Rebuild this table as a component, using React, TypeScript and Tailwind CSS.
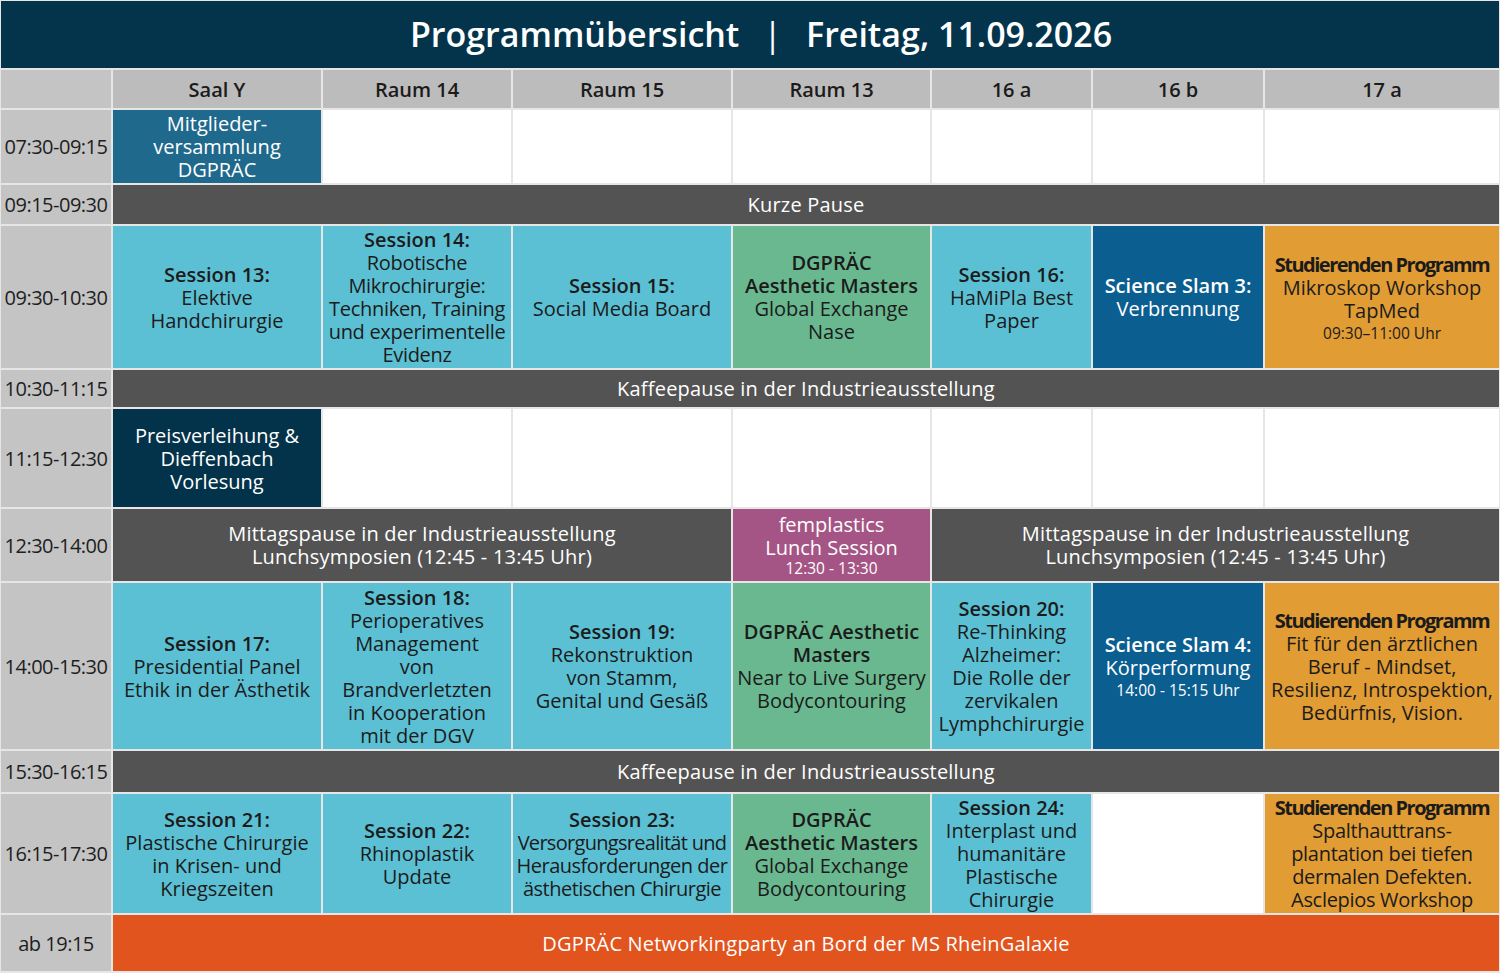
import type { ReactNode } from "react";

type CellProps = {
  className?: string;
  children?: ReactNode;
};

function Cell({ className = "", children }: CellProps) {
  return (
    <div
      className={`flex flex-col items-center justify-center overflow-hidden text-center text-[20px] leading-[23px] ${className}`}
    >
      {children}
    </div>
  );
}

const cyan = "bg-[#5bc0d4] text-[#1b1b1b]";
const green = "bg-[#6ab890] text-[#1b1b1b]";
const navy = "bg-[#0b5e90] text-white";
const orange = "bg-[#e19c34] text-[#1b1b1b]";
const pause = "bg-[#535353] text-white tracking-[0.2px]";
const time = "bg-[#c4c4c4] text-[#1e1e1e] text-[15px] tracking-[-0.5px]";
const white = "bg-white";
const small = "mt-[2px] text-[15.5px] leading-[18px]";

function Studi({ children }: { children: ReactNode }) {
  return (
    <>
      <b className="font-bold tracking-[-1.5px]">Studierenden Programm</b>
      {children}
    </>
  );
}

export default function App() {
  return (
    <div
      className="min-h-screen w-[1500px] bg-[#e6e6e6] px-px pt-px pb-[2px]"
      style={{ fontFamily: '"Open Sans", "Noto Sans", sans-serif' }}
    >
      <header className="flex h-[67px] items-center justify-center bg-[#04344b] pl-[22px] text-[34px] font-semibold text-white">
        <span>Programmübersicht</span>
        <span className="px-[24px] font-normal">|</span>
        <span>Freitag, 11.09.2026</span>
      </header>

      <div className="mt-[2px] grid grid-cols-[110px_208px_188px_218px_197px_159px_170px_234px] grid-rows-[38px_73px_39px_142px_37px_98px_72px_166px_41px_119px_56px] gap-[2px]">
        {/* column headers */}
        <Cell className="bg-[#c4c4c4]" />
        {["Saal Y", "Raum 14", "Raum 15", "Raum 13", "16 a", "16 b", "17 a"].map((r) => (
          <Cell key={r} className="bg-[#bdbcbc] pt-px font-semibold text-[#1b1b1b]">
            {r}
          </Cell>
        ))}

        {/* 07:30 */}
        <Cell className={time}>07:30-09:15</Cell>
        <Cell className="bg-[#1f698d] text-white">
          <span>Mitglieder-</span>
          <span>versammlung</span>
          <span>DGPRÄC</span>
        </Cell>
        <Cell className={white} />
        <Cell className={white} />
        <Cell className={white} />
        <Cell className={white} />
        <Cell className={white} />
        <Cell className={white} />

        {/* 09:15 */}
        <Cell className={time}>09:15-09:30</Cell>
        <Cell className={`${pause} col-span-7`}>Kurze Pause</Cell>

        {/* 09:30 */}
        <Cell className={time}>09:30-10:30</Cell>
        <Cell className={cyan}>
          <b className="font-semibold">Session 13:</b>
          Elektive
          <br />
          Handchirurgie
        </Cell>
        <Cell className={`${cyan} tracking-[-0.3px]`}>
          <b className="font-semibold tracking-normal">Session 14:</b>
          Robotische
          <br />
          Mikrochirurgie:
          <br />
          Techniken, Training
          <br />
          und experimentelle
          <br />
          Evidenz
        </Cell>
        <Cell className={cyan}>
          <b className="font-semibold">Session 15:</b>
          Social Media Board
        </Cell>
        <Cell className={green}>
          <b className="font-semibold">DGPRÄC</b>
          <b className="font-semibold">Aesthetic Masters</b>
          Global Exchange
          <br />
          Nase
        </Cell>
        <Cell className={cyan}>
          <b className="font-semibold">Session 16:</b>
          HaMiPla Best
          <br />
          Paper
        </Cell>
        <Cell className={navy}>
          <b className="font-semibold">Science Slam 3:</b>
          Verbrennung
        </Cell>
        <Cell className={orange}>
          <Studi>
            <span>Mikroskop Workshop</span>
            <span>TapMed</span>
            <span className={small}>09:30–11:00 Uhr</span>
          </Studi>
        </Cell>

        {/* 10:30 */}
        <Cell className={time}>10:30-11:15</Cell>
        <Cell className={`${pause} col-span-7`}>Kaffeepause in der Industrieausstellung</Cell>

        {/* 11:15 */}
        <Cell className={time}>11:15-12:30</Cell>
        <Cell className="bg-[#03334a] text-white">
          Preisverleihung &amp;
          <br />
          Dieffenbach
          <br />
          Vorlesung
        </Cell>
        <Cell className={white} />
        <Cell className={white} />
        <Cell className={white} />
        <Cell className={white} />
        <Cell className={white} />
        <Cell className={white} />

        {/* 12:30 */}
        <Cell className={time}>12:30-14:00</Cell>
        <Cell className={`${pause} col-span-3`}>
          Mittagspause in der Industrieausstellung
          <br />
          Lunchsymposien (12:45 - 13:45 Uhr)
        </Cell>
        <Cell className="bg-[#a55585] text-white">
          <span>femplastics</span>
          <span>Lunch Session</span>
          <span className="text-[15.5px] leading-[18px]">12:30 - 13:30</span>
        </Cell>
        <Cell className={`${pause} col-span-3`}>
          Mittagspause in der Industrieausstellung
          <br />
          Lunchsymposien (12:45 - 13:45 Uhr)
        </Cell>

        {/* 14:00 */}
        <Cell className={time}>14:00-15:30</Cell>
        <Cell className={cyan}>
          <b className="font-semibold">Session 17:</b>
          Presidential Panel
          <br />
          Ethik in der Ästhetik
        </Cell>
        <Cell className={cyan}>
          <b className="font-semibold">Session 18:</b>
          Perioperatives
          <br />
          Management
          <br />
          von
          <br />
          Brandverletzten
          <br />
          in Kooperation
          <br />
          mit der DGV
        </Cell>
        <Cell className={cyan}>
          <b className="font-semibold">Session 19:</b>
          Rekonstruktion
          <br />
          von Stamm,
          <br />
          Genital und Gesäß
        </Cell>
        <Cell className={green}>
          <b className="font-semibold">DGPRÄC Aesthetic</b>
          <b className="font-semibold">Masters</b>
          Near to Live Surgery
          <br />
          Bodycontouring
        </Cell>
        <Cell className={cyan}>
          <b className="font-semibold">Session 20:</b>
          Re-Thinking
          <br />
          Alzheimer:
          <br />
          Die Rolle der
          <br />
          zervikalen
          <br />
          Lymphchirurgie
        </Cell>
        <Cell className={navy}>
          <b className="font-semibold">Science Slam 4:</b>
          Körperformung
          <span className={small}>14:00 - 15:15 Uhr</span>
        </Cell>
        <Cell className={orange}>
          <Studi>
            <span>Fit für den ärztlichen</span>
            <span>Beruf - Mindset,</span>
            <span>Resilienz, Introspektion,</span>
            <span>Bedürfnis, Vision.</span>
          </Studi>
        </Cell>

        {/* 15:30 */}
        <Cell className={time}>15:30-16:15</Cell>
        <Cell className={`${pause} col-span-7`}>Kaffeepause in der Industrieausstellung</Cell>

        {/* 16:15 */}
        <Cell className={time}>16:15-17:30</Cell>
        <Cell className={cyan}>
          <b className="font-semibold">Session 21:</b>
          Plastische Chirurgie
          <br />
          in Krisen- und
          <br />
          Kriegszeiten
        </Cell>
        <Cell className={cyan}>
          <b className="font-semibold">Session 22:</b>
          Rhinoplastik
          <br />
          Update
        </Cell>
        <Cell className={cyan}>
          <b className="font-semibold">Session 23:</b>
          <span className="tracking-[-0.7px]">Versorgungsrealität und</span>
          <span className="tracking-[-0.5px]">Herausforderungen der</span>
          <span className="tracking-[-0.5px]">ästhetischen Chirurgie</span>
        </Cell>
        <Cell className={green}>
          <b className="font-semibold">DGPRÄC</b>
          <b className="font-semibold">Aesthetic Masters</b>
          Global Exchange
          <br />
          Bodycontouring
        </Cell>
        <Cell className={cyan}>
          <b className="font-semibold">Session 24:</b>
          Interplast und
          <br />
          humanitäre
          <br />
          Plastische
          <br />
          Chirurgie
        </Cell>
        <Cell className={white} />
        <Cell className={orange}>
          <Studi>
            <span className="tracking-[-0.3px]">Spalthauttrans-</span>
            <span className="tracking-[-0.3px]">plantation bei tiefen</span>
            <span className="tracking-[-0.3px]">dermalen Defekten.</span>
            <span className="tracking-[-0.3px]">Asclepios Workshop</span>
          </Studi>
        </Cell>

        {/* evening */}
        <Cell className={time}>ab 19:15</Cell>
        <Cell className="col-span-7 bg-[#e2541e] text-white tracking-[0.2px]">
          DGPRÄC Networkingparty an Bord der MS RheinGalaxie
        </Cell>
      </div>
    </div>
  );
}
